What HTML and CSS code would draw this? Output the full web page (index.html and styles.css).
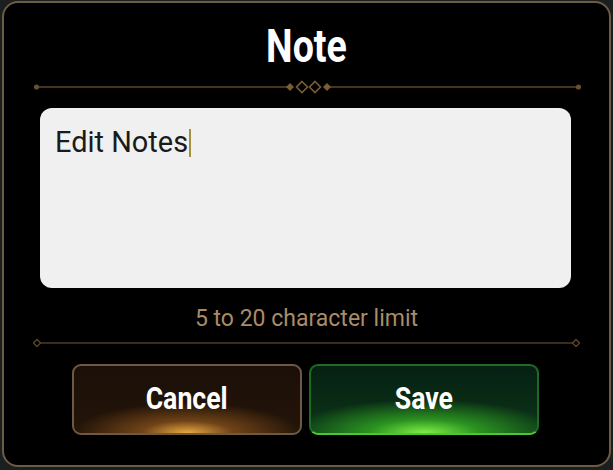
FILE: index.html
```html
<!DOCTYPE html>
<html>
<head>
<meta charset="utf-8">
<link rel="stylesheet" href="styles.css">
</head>
<body>
<div class="panel">
  <h1 class="title"><span>Note</span></h1>
  <svg class="divider-top" width="547" height="14" viewBox="0 0 547 14">
    <line x1="0" y1="7" x2="254" y2="7" stroke="#5e4629" stroke-width="1.6"/>
    <line x1="295" y1="7" x2="547" y2="7" stroke="#5e4629" stroke-width="1.6"/>
    <circle cx="2.5" cy="7" r="2.6" fill="#6a5030"/>
    <circle cx="544.5" cy="7" r="2.6" fill="#6a5030"/>
    <path d="M256 3 L260 7 L256 11 L252 7 Z" fill="#7a5c36"/>
    <path d="M293 3 L297 7 L293 11 L289 7 Z" fill="#7a5c36"/>
    <path d="M268 1.5 L273.5 7 L268 12.5 L262.5 7 Z" fill="none" stroke="#7a5c36" stroke-width="1.6"/>
    <path d="M281 1.5 L286.5 7 L281 12.5 L275.5 7 Z" fill="none" stroke="#7a5c36" stroke-width="1.6"/>
  </svg>
  <div class="note-box">
    <span class="note-text">Edit Notes</span><span class="caret"></span>
  </div>
  <p class="hint">5 to 20 character limit</p>
  <svg class="divider-bottom" width="547" height="10" viewBox="0 0 547 10">
    <line x1="7" y1="5" x2="540" y2="5" stroke="#4d3b26" stroke-width="1.4"/>
    <path d="M4 1.5 L7.5 5 L4 8.5 L0.5 5 Z" fill="#000" stroke="#5e4629" stroke-width="1.3"/>
    <path d="M543 1.5 L546.5 5 L543 8.5 L539.5 5 Z" fill="#000" stroke="#5e4629" stroke-width="1.3"/>
  </svg>
  <div class="actions">
    <button class="btn btn-cancel"><span>Cancel</span></button>
    <button class="btn btn-save"><span>Save</span></button>
  </div>
</div>
</body>
</html>
```
FILE: styles.css
```css
html, body {
  margin: 0;
  padding: 0;
}
body {
  width: 613px;
  height: 470px;
  background: #1b1f1f;
  font-family: "Roboto", "Liberation Sans", sans-serif;
  overflow: hidden;
}
.panel {
  box-sizing: border-box;
  width: 609px;
  height: 466px;
  margin: 1px 0 0 2px;
  border: 2px solid #6d5b42;
  border-radius: 16px;
  background: #000;
  display: flex;
  flex-direction: column;
  align-items: center;
}
.title {
  margin: 19px 0 0 0;
  height: 47px;
  font-size: 47px;
  line-height: 47px;
  font-weight: 700;
  color: #fff;
}
.title span {
  display: inline-block;
  transform: scaleX(0.8);
}
.divider-top {
  display: block;
  margin-top: 11px;
  margin-left: 2px;
}
.note-box {
  box-sizing: border-box;
  width: 531px;
  height: 180px;
  margin-top: 14px;
  margin-left: -2px;
  background: #f0f0f0;
  border-radius: 12px;
  padding: 16px 15px;
  display: flex;
  align-items: flex-start;
}
.note-text {
  font-size: 30px;
  line-height: 36px;
  color: #1a1a1a;
  display: inline-block;
  transform: scaleX(0.965);
  transform-origin: left center;
  margin-right: -4px;
}
.caret {
  display: inline-block;
  width: 2px;
  height: 28px;
  margin-top: 5px;
  background: #a3913f;
}
.hint {
  margin: 17px 0 0 0;
  font-size: 23px;
  line-height: 27px;
  color: #a98b68;
}
.divider-bottom {
  display: block;
  margin-top: 6px;
}
.actions {
  display: flex;
  gap: 7px;
  margin-top: 16px;
  margin-left: -2px;
}
.btn {
  box-sizing: border-box;
  width: 230px;
  height: 71px;
  border-radius: 9px;
  font-family: "Roboto", "Liberation Sans", sans-serif;
  font-size: 31px;
  font-weight: 700;
  color: #fff;
  padding: 0;
  display: flex;
  align-items: center;
  justify-content: center;
}
.btn span {
  display: inline-block;
  transform: scaleX(0.86);
  margin-top: -2px;
}
.btn-cancel {
  border: 2px solid #6f5943;
  background:
    radial-gradient(ellipse 50% 45% at 50% 100%, rgba(245,180,70,0.95) 0%, rgba(175,105,35,0.55) 40%, rgba(80,40,10,0) 100%),
    linear-gradient(#1b0f08, #241508);
}
.btn-save {
  border: 2px solid #1f6a24;
  border-bottom-color: #4cc92c;
  background:
    radial-gradient(ellipse 60% 50% at 50% 100%, rgba(130,240,70,1) 0%, rgba(50,170,35,0.8) 40%, rgba(20,90,20,0) 100%),
    linear-gradient(#062013, #0c3517);
}
```
